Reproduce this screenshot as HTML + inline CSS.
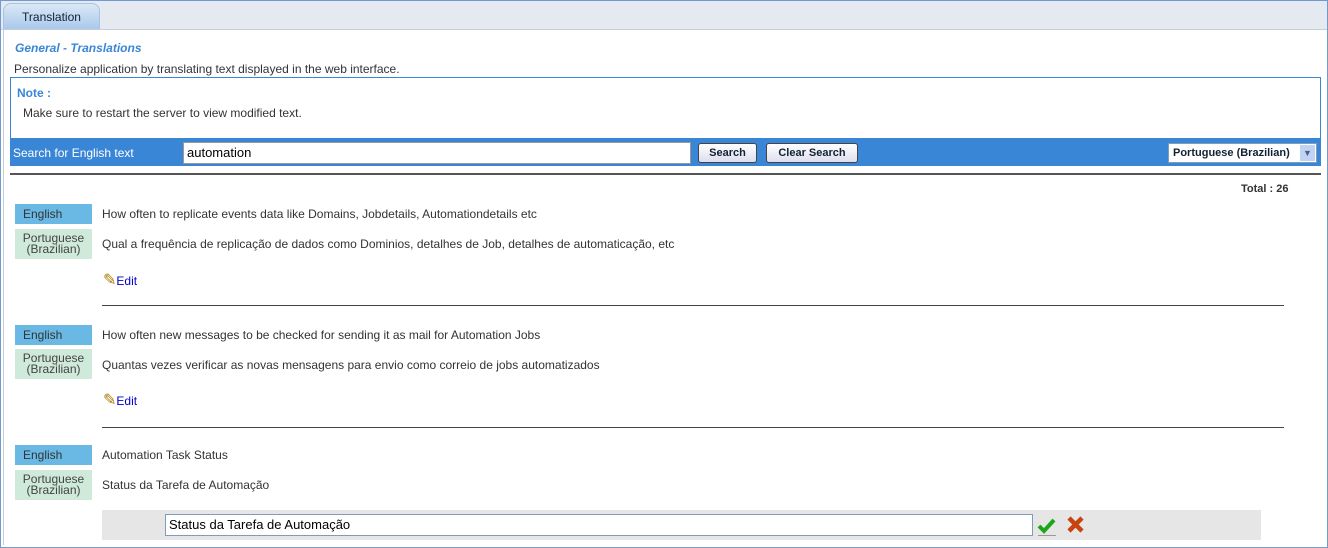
<!DOCTYPE html>
<html><head><style>
body{margin:0;width:1328px;height:548px;position:relative;font-family:"Liberation Sans",sans-serif;font-size:12px;color:#333;background:#fff;overflow:hidden}
.a{position:absolute}
.en{position:absolute;left:15px;width:77px;height:20px;background:#6ab8e4;color:#333;text-align:left;padding-left:8px;box-sizing:border-box;line-height:20px;font-size:12px}
.pt{position:absolute;left:15px;width:77px;height:30px;background:#cfeadb;color:#444;text-align:center;font-size:12px;line-height:11px;padding-top:4px;box-sizing:border-box}
.t{position:absolute;left:102px;font-size:12px;color:#333}
.sep{position:absolute;left:102px;width:1182px;height:1px;background:#444}
.edit{position:absolute;left:103px;color:#00c;font-size:12px}
.btn{position:absolute;top:143px;height:20px;border:1px solid #444;border-radius:3px;background:linear-gradient(#fff,#dde);font-weight:bold;font-size:11px;color:#123;text-align:center;line-height:19px;box-sizing:border-box}
</style></head><body>
<div class="a" style="left:0;top:0;width:1326px;height:546px;border:1px solid #6f9bd0"></div>
<div class="a" style="left:1px;top:1px;width:1326px;height:28px;background:#e5eaf1;border-bottom:1px solid #c8ced6"></div>
<div class="a" style="left:3px;top:3px;width:95px;height:25px;border:1px solid #a9c3e0;border-bottom:none;border-radius:8px 8px 0 0;background:linear-gradient(#dbe8f6,#a9c9ec);text-align:center;line-height:26px;color:#123;font-size:12px">Translation</div>
<div class="a" style="left:3px;top:29px;width:1px;height:516px;background:#c8ced6"></div>
<div class="a" style="left:15px;top:41px;color:#3a86d6;font-weight:bold;font-style:italic;font-size:12px">General - Translations</div>
<div class="a" style="left:14px;top:62px;font-size:12px;color:#333">Personalize application by translating text displayed in the web interface.</div>
<div class="a" style="left:10px;top:77px;width:1309px;height:60px;border:1px solid #3a86d6;border-bottom:none"></div>
<div class="a" style="left:17px;top:86px;color:#3a86d6;font-weight:bold;font-size:12px">Note :</div>
<div class="a" style="left:23px;top:106px;font-size:12px;color:#333">Make sure to restart the server to view modified text.</div>
<div class="a" style="left:10px;top:138px;width:1311px;height:28px;background:#3a86d6"></div>
<div class="a" style="left:13px;top:146px;color:#fff;font-size:12px">Search for English text</div>
<div class="a" style="left:183px;top:142px;width:508px;height:22px;background:#fff;border:1px solid #999;box-sizing:border-box;padding-left:3px;line-height:20px;font-size:13px;color:#000">automation</div>
<div class="btn" style="left:698px;width:59px">Search</div>
<div class="btn" style="left:766px;width:92px">Clear Search</div>
<div class="a" style="left:1168px;top:143px;width:149px;height:20px;background:#fff;border:1px solid #7f9db9;box-sizing:border-box;font-weight:bold;font-size:11px;color:#123;line-height:18px;padding-left:4px">Portuguese (Brazilian)</div>
<div class="a" style="left:1300px;top:145px;width:15px;height:16px;background:#c1d3f5;color:#4d6185;font-size:9px;text-align:center;line-height:16px">&#9660;</div>
<div class="a" style="left:10px;top:173px;width:1311px;height:2px;background:#555"></div>
<div class="a" style="left:1241px;top:183px;font-weight:bold;font-size:11px;color:#333">Total : 26</div>

<div class="en" style="top:204px">English</div>
<div class="t" style="top:207px">How often to replicate events data like Domains, Jobdetails, Automationdetails etc</div>
<div class="pt" style="top:229px">Portuguese<br>(Brazilian)</div>
<div class="t" style="top:237px">Qual a frequência de replicação de dados como Dominios, detalhes de Job, detalhes de automaticação, etc</div>
<div class="edit" style="top:270px"><span style="font-size:16px;color:#a70">&#9998;</span>Edit</div>
<div class="sep" style="top:305px"></div>

<div class="en" style="top:325px">English</div>
<div class="t" style="top:328px">How often new messages to be checked for sending it as mail for Automation Jobs</div>
<div class="pt" style="top:349px">Portuguese<br>(Brazilian)</div>
<div class="t" style="top:358px">Quantas vezes verificar as novas mensagens para envio como correio de jobs automatizados</div>
<div class="edit" style="top:390px"><span style="font-size:16px;color:#a70">&#9998;</span>Edit</div>
<div class="sep" style="top:427px"></div>

<div class="en" style="top:445px">English</div>
<div class="t" style="top:448px">Automation Task Status</div>
<div class="pt" style="top:470px">Portuguese<br>(Brazilian)</div>
<div class="t" style="top:478px">Status da Tarefa de Automação</div>
<div class="a" style="left:102px;top:510px;width:1159px;height:30px;background:#e6e6e6"></div>
<div class="a" style="left:165px;top:514px;width:868px;height:22px;background:#fff;border:1px solid #7f9db9;box-sizing:border-box;padding-left:3px;line-height:20px;font-size:13px;color:#000">Status da Tarefa de Automação</div>
<svg class="a" style="left:1036px;top:516px" width="22" height="22"><path d="M3 10 L8 15 L18 4" stroke="#1aa81a" stroke-width="4" fill="none"/><rect x="2" y="19" width="18" height="1" fill="#999"/></svg>
<svg class="a" style="left:1066px;top:515px" width="20" height="20"><path d="M3 3 L16 16 M16 3 L3 16" stroke="#c94310" stroke-width="4.5"/></svg>
</body></html>
